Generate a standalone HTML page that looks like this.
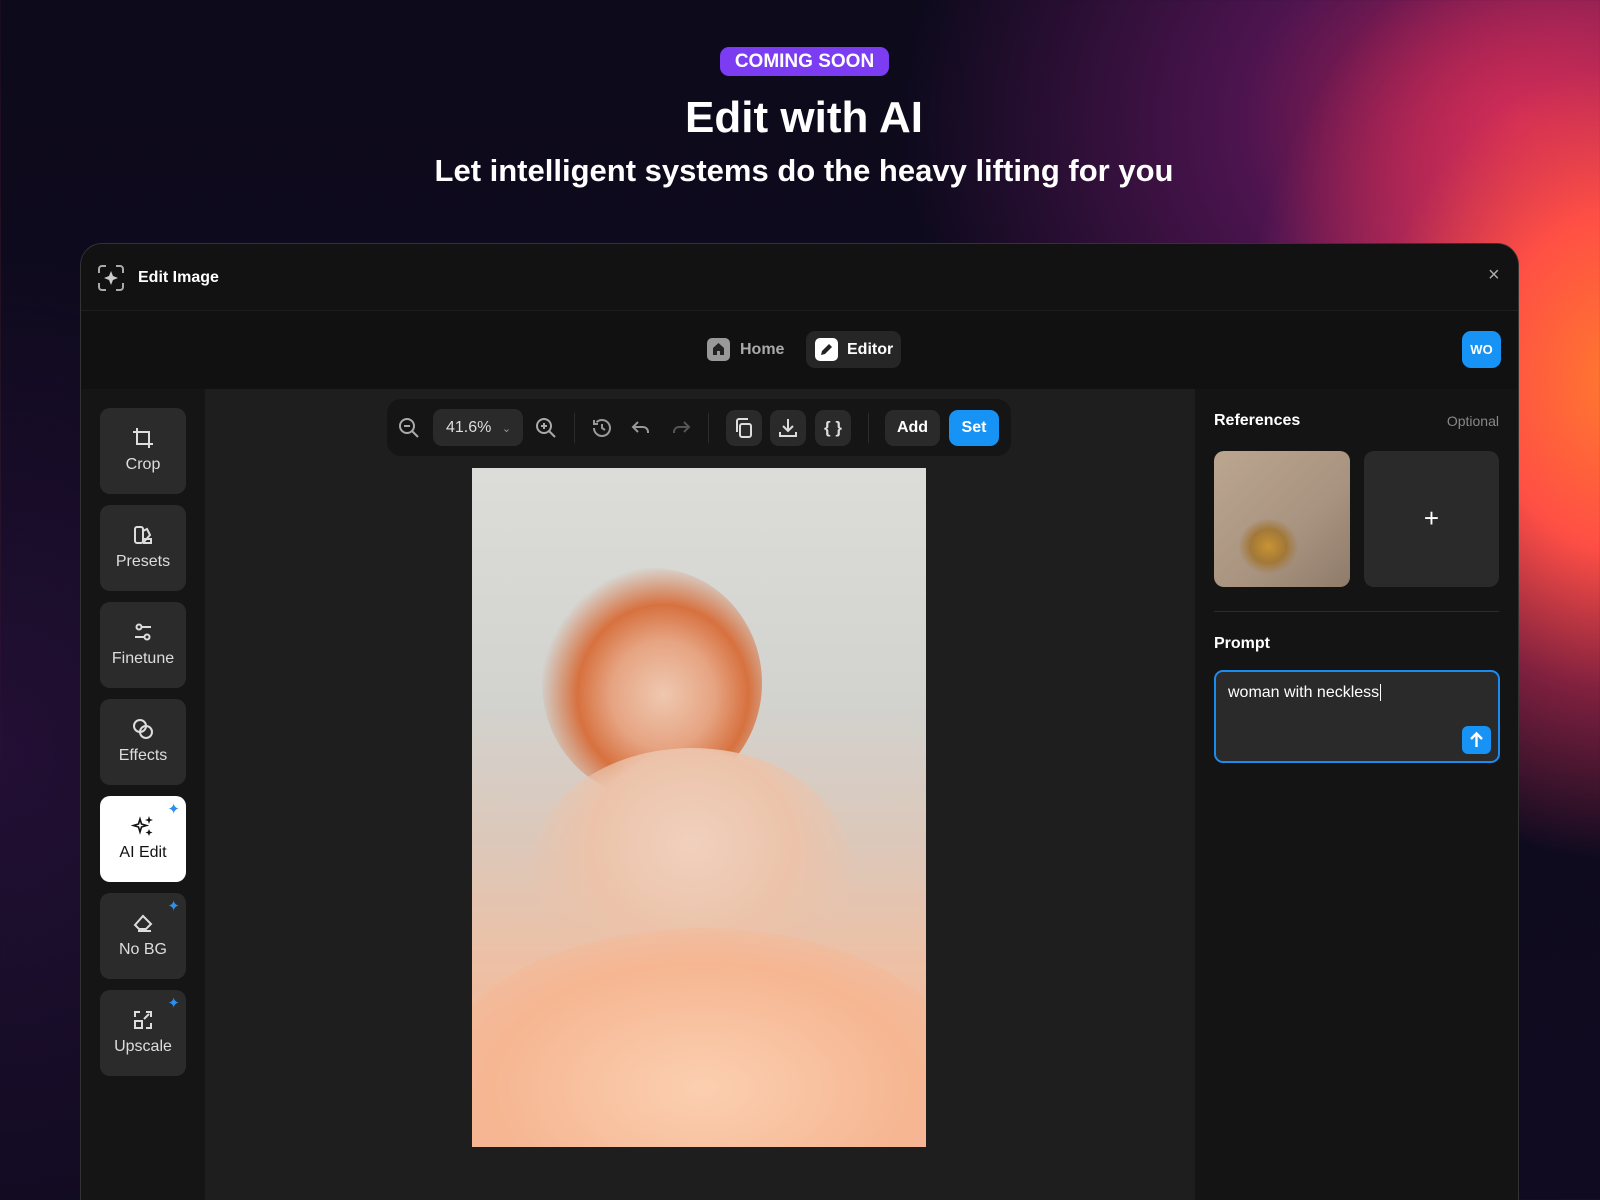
<!DOCTYPE html>
<html><head><meta charset="utf-8"><style>
*{margin:0;padding:0;box-sizing:border-box}
html,body{width:1600px;height:1200px;overflow:hidden}
body{font-family:"Liberation Sans",sans-serif;position:relative;
background:
radial-gradient(ellipse 380px 480px at 1620px 380px,#ff7a2e 0%,#ff4f45 35%,rgba(220,50,90,0.55) 65%,rgba(120,30,110,0) 100%),
radial-gradient(ellipse 620px 480px at 1520px 120px,rgba(220,40,90,0.85) 0%,rgba(140,30,130,0.5) 45%,rgba(40,15,50,0) 100%),
radial-gradient(ellipse 400px 500px at 0px 750px,rgba(60,20,80,0.45),rgba(0,0,0,0) 100%),
linear-gradient(180deg,#0d0a1c 0%,#100b20 100%);}
.abs{position:absolute}
.badge{left:720px;top:47px;width:169px;height:29px;border-radius:9px;background:#7b3cf2;color:#fff;font-weight:bold;font-size:19px;text-align:center;line-height:29px}
h1{position:absolute;left:0;width:1608px;top:93px;text-align:center;color:#fff;font-size:44px;font-weight:bold}
h2{position:absolute;left:0;width:1608px;top:153px;text-align:center;color:#fff;font-size:31px;font-weight:bold}
.win{left:80px;top:243px;width:1439px;height:957px;border-radius:22px 22px 0 0;background:#121212;overflow:hidden;border:1px solid #333;border-bottom:none}
.hdr{left:0;top:0;width:100%;height:67px;background:#121212;border-bottom:1px solid #1e1e1e}
.nav{left:0;top:67px;width:100%;height:78px;background:#111}
.side{left:0;top:145px;width:124px;height:820px;background:#151515}
.canvas{left:124px;top:145px;width:990px;height:820px;background:#1e1e1e}
.right{left:1114px;top:145px;width:330px;height:820px;background:#141414}
.sb{position:absolute;left:19px;width:86px;height:86px;border-radius:10px;background:#2b2b2b;color:#ddd;font-size:16px;text-align:center}
.sb svg{position:absolute;left:31px;top:18px}
.sb span{position:absolute;left:0;width:100%;top:48px}
.sb.act{background:#fff;color:#111}
.star{position:absolute;right:6px;top:6px;color:#2b8ff0;font-size:15px;line-height:1}
.tb{position:absolute;width:36px;height:36px;border-radius:9px;background:#2a2a2a}
.tb svg,.ti{position:absolute}
</style></head><body>
<div class="abs badge">COMING SOON</div>
<h1>Edit with AI</h1>
<h2>Let intelligent systems do the heavy lifting for you</h2>
<div class="abs win">
 <div class="abs hdr">
  <svg class="abs" style="left:16px;top:20px" width="28" height="28" viewBox="0 0 28 28" fill="none" stroke="#aaa" stroke-width="2"><path d="M2 9V5a3 3 0 0 1 3-3h4M19 2h4a3 3 0 0 1 3 3v4M26 19v4a3 3 0 0 1-3 3h-4M9 26H5a3 3 0 0 1-3-3v-4"/><path d="M14 7l2 5 5 2-5 2-2 5-2-5-5-2 5-2z" fill="#ccc" stroke="none"/></svg>
  <div class="abs" style="left:57px;top:25px;color:#fff;font-size:16px;font-weight:bold">Edit Image</div>
  <div class="abs" style="left:1407px;top:20px;color:#aaa;font-size:20px">×</div>
 </div>
 <div class="abs nav">
  <div class="abs" style="left:626px;top:27px;width:23px;height:23px;border-radius:5px;background:#999"><svg width="23" height="23" viewBox="0 0 23 23"><path d="M6 17V10l5.5-5 5.5 5v7h-4v-4h-3v4z" fill="#222"/></svg></div>
  <div class="abs" style="left:659px;top:30px;color:#aaa;font-size:16px;font-weight:bold">Home</div>
  <div class="abs" style="left:725px;top:20px;width:95px;height:37px;border-radius:9px;background:#262626"></div>
  <div class="abs" style="left:734px;top:27px;width:23px;height:23px;border-radius:5px;background:#fff"><svg width="23" height="23" viewBox="0 0 23 23"><path d="M6 17l1-4 7-7 3 3-7 7z" fill="#222"/></svg></div>
  <div class="abs" style="left:766px;top:30px;color:#fff;font-size:16px;font-weight:bold">Editor</div>
  <div class="abs" style="left:1381px;top:20px;width:39px;height:37px;border-radius:9px;background:#1793f5;color:#fff;font-size:13px;font-weight:bold;text-align:center;line-height:37px">WO</div>
 </div>
 <div class="abs side">
  <div class="sb" style="top:19px"><svg width="24" height="24" viewBox="0 0 24 24" fill="none" stroke="#ddd" stroke-width="2"><path d="M6 2v16h16M2 6h16v16"/></svg><span>Crop</span></div>
  <div class="sb" style="top:116px"><svg width="24" height="24" viewBox="0 0 24 24" fill="none" stroke="#ddd" stroke-width="2"><rect x="4" y="4" width="8" height="16" rx="2"/><path d="M12 8l4-2 3 6-7 8M12 16h8v4h-8"/></svg><span>Presets</span></div>
  <div class="sb" style="top:213px"><svg width="24" height="24" viewBox="0 0 24 24" fill="none" stroke="#ddd" stroke-width="2"><circle cx="8" cy="7" r="2.5"/><circle cx="16" cy="17" r="2.5"/><path d="M11 7h9M4 17h9"/></svg><span>Finetune</span></div>
  <div class="sb" style="top:310px"><svg width="24" height="24" viewBox="0 0 24 24" fill="none" stroke="#ddd" stroke-width="2"><circle cx="9" cy="9" r="6"/><circle cx="15" cy="15" r="6"/></svg><span>Effects</span></div>
  <div class="sb act" style="top:407px"><svg width="24" height="24" viewBox="0 0 24 24" fill="#111"><path d="M9 5l1.5 5 5 1.5-5 1.5L9 18l-1.5-5-5-1.5 5-1.5z" fill="none" stroke="#111" stroke-width="1.6"/><path d="M18 2l1 3 3 1-3 1-1 3-1-3-3-1 3-1zM18 15l1 2.5 2.5 1-2.5 1-1 2.5-1-2.5-2.5-1 2.5-1z"/></svg><span>AI Edit</span><div class="star">✦</div></div>
  <div class="sb" style="top:504px"><svg width="24" height="24" viewBox="0 0 24 24" fill="none" stroke="#ddd" stroke-width="2"><path d="M4 14l8-9 8 8-5 5H8zM7 20h13"/></svg><span>No BG</span><div class="star">✦</div></div>
  <div class="sb" style="top:601px"><svg width="24" height="24" viewBox="0 0 24 24" fill="none" stroke="#ddd" stroke-width="2"><path d="M4 9V4h5M15 4h5v5M20 15v5h-5"/><rect x="4" y="13" width="7" height="7"/><path d="M13 11l5-5"/></svg><span>Upscale</span><div class="star">✦</div></div>
 </div>
 <div class="abs canvas">
  <div class="abs" style="left:182px;top:10px;width:624px;height:57px;border-radius:14px;background:#151515"></div>
  <svg class="ti" style="left:192px;top:27px" width="24" height="24" viewBox="0 0 24 24" fill="none" stroke="#aaa" stroke-width="2"><circle cx="10" cy="10" r="7"/><path d="M15 15l6 6M7 10h6"/></svg>
  <div class="abs" style="left:228px;top:20px;width:90px;height:37px;border-radius:9px;background:#2a2a2a;color:#ddd;font-size:16px;line-height:37px;padding-left:13px">41.6% <span style="font-size:11px;color:#999;margin-left:6px">⌄</span></div>
  <svg class="ti" style="left:329px;top:27px" width="24" height="24" viewBox="0 0 24 24" fill="none" stroke="#aaa" stroke-width="2"><circle cx="10" cy="10" r="7"/><path d="M15 15l6 6M7 10h6M10 7v6"/></svg>
  <div class="abs" style="left:369px;top:24px;width:1px;height:30px;background:#2c2c2c"></div>
  <svg class="ti" style="left:385px;top:27px" width="24" height="24" viewBox="0 0 24 24" fill="none" stroke="#999" stroke-width="2"><path d="M4 12a8 8 0 1 0 2.5-5.8M4 4v4h4M12 8v4l3 2"/></svg>
  <svg class="ti" style="left:424px;top:27px" width="24" height="24" viewBox="0 0 24 24" fill="none" stroke="#999" stroke-width="2"><path d="M9 6L4 11l5 5M4 11h10a5 5 0 0 1 5 5v1"/></svg>
  <svg class="ti" style="left:464px;top:27px" width="24" height="24" viewBox="0 0 24 24" fill="none" stroke="#555" stroke-width="2"><path d="M15 6l5 5-5 5M20 11H10a5 5 0 0 0-5 5v1"/></svg>
  <div class="abs" style="left:503px;top:24px;width:1px;height:30px;background:#2c2c2c"></div>
  <div class="tb" style="left:521px;top:21px"><svg style="left:6px;top:6px" width="24" height="24" viewBox="0 0 24 24" fill="none" stroke="#ddd" stroke-width="2"><rect x="8" y="8" width="11" height="13" rx="2"/><path d="M5 16V5a2 2 0 0 1 2-2h9"/></svg></div>
  <div class="tb" style="left:565px;top:21px"><svg style="left:6px;top:6px" width="24" height="24" viewBox="0 0 24 24" fill="none" stroke="#ddd" stroke-width="2"><path d="M12 3v12M7 10l5 5 5-5M4 16v4h16v-4"/></svg></div>
  <div class="tb" style="left:610px;top:21px;color:#ddd;font-size:17px;font-weight:bold;text-align:center;line-height:36px">{ }</div>
  <div class="abs" style="left:663px;top:24px;width:1px;height:30px;background:#2c2c2c"></div>
  <div class="abs" style="left:680px;top:21px;width:55px;height:36px;border-radius:9px;background:#2a2a2a;color:#fff;font-weight:bold;font-size:16px;text-align:center;line-height:36px">Add</div>
  <div class="abs" style="left:744px;top:21px;width:50px;height:36px;border-radius:9px;background:#1793f5;color:#fff;font-weight:bold;font-size:16px;text-align:center;line-height:36px">Set</div>
  <div class="abs" style="left:267px;top:79px;width:454px;height:679px;overflow:hidden;background:linear-gradient(180deg,#dcdcd9 0%,#d2d2ce 35%,#dcc8ba 55%,#efbfa3 75%,#f4b795 100%)">
   <div class="abs" style="left:70px;top:100px;width:220px;height:230px;border-radius:50%;background:radial-gradient(ellipse at 55% 55%,#efc8b0 0%,#e6a482 30%,#d7713f 50%,rgba(210,110,60,0) 72%)"></div>
   <div class="abs" style="left:60px;top:280px;width:320px;height:240px;border-radius:50%;background:radial-gradient(ellipse at 50% 40%,#f0d0bd 0%,#ecc3aa 45%,rgba(236,195,170,0) 75%)"></div>
   <div class="abs" style="left:-40px;top:460px;width:540px;height:320px;border-radius:50%;background:radial-gradient(ellipse at 50% 50%,#fbcfb0 0%,#f6b692 55%,rgba(245,180,140,0) 80%)"></div>
  </div>
 </div>
 <div class="abs right">
  <div class="abs" style="left:19px;top:23px;color:#fff;font-weight:bold;font-size:16px">References</div>
  <div class="abs" style="right:26px;top:24px;color:#888;font-size:14px">Optional</div>
  <div class="abs" style="left:19px;top:62px;width:136px;height:136px;border-radius:10px;background:radial-gradient(ellipse 30px 28px at 40% 70%,#c89332 0%,#a27838 60%,rgba(170,140,110,0) 100%),linear-gradient(135deg,#bba690 0%,#a89380 60%,#8f7b69 100%)"></div>
  <div class="abs" style="left:169px;top:62px;width:135px;height:136px;border-radius:10px;background:#2a2a2a;color:#fff;font-size:26px;text-align:center;line-height:134px">+</div>
  <div class="abs" style="left:19px;top:222px;width:285px;height:1px;background:#2c2c2c"></div>
  <div class="abs" style="left:19px;top:246px;color:#fff;font-weight:bold;font-size:16px">Prompt</div>
  <div class="abs" style="left:19px;top:281px;width:286px;height:93px;border-radius:9px;border:2px solid #1a8cf0;background:#2a2a2a"></div>
  <div class="abs" style="left:33px;top:295px;color:#fff;font-size:16px">woman with neckless<span style="border-left:1px solid #fff;margin-left:1px"></span></div>
  <div class="abs" style="left:267px;top:337px;width:29px;height:28px;border-radius:6px;background:#1793f5"><svg width="29" height="28" viewBox="0 0 29 28" fill="none" stroke="#fff" stroke-width="2.4"><path d="M14.5 21V8M9 13l5.5-5.5L20 13"/></svg></div>
 </div>
</div>
</body></html>
